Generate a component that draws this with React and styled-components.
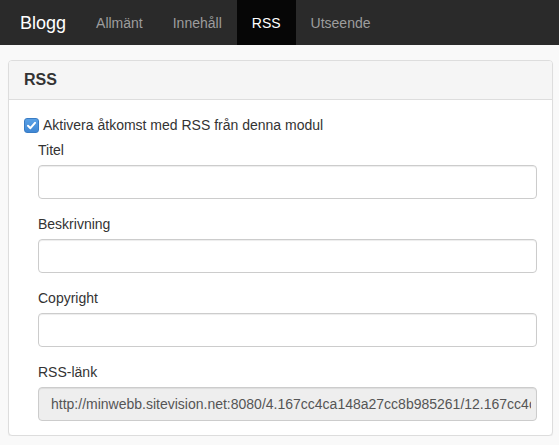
import React from "react";
import styled, { createGlobalStyle } from "styled-components";

const Global = createGlobalStyle`
  * { box-sizing: border-box; }
  html, body { margin: 0; padding: 0; }
  body {
    background: #f9f9f9;
    font-family: "Helvetica Neue", "Liberation Sans", Arial, sans-serif;
    font-size: 14px;
    line-height: 20px;
    color: #333;
  }
`;

const Navbar = styled.nav`
  display: flex;
  align-items: stretch;
  height: 45px;
  background: #2a2a2a;
  padding-left: 5px;
`;

const Brand = styled.a`
  display: flex;
  align-items: center;
  padding: 0 15px;
  font-size: 18px;
  color: #fff;
  text-decoration: none;
`;

const NavLink = styled.a`
  display: flex;
  align-items: center;
  padding: 0 15px;
  font-size: 14px;
  text-decoration: none;
  color: ${(p) => (p.$active ? "#fff" : "#9d9d9d")};
  background: ${(p) => (p.$active ? "#060606" : "transparent")};
`;

const Page = styled.main`
  padding: 15px 6px 0 8px;
`;

const Panel = styled.section`
  background: #fff;
  border: 1px solid #ddd;
  border-radius: 4px;
  box-shadow: 0 1px 1px rgba(0, 0, 0, 0.05);
  overflow: hidden;
`;

const PanelHeading = styled.header`
  background: #f5f5f5;
  border-bottom: 1px solid #ddd;
  padding: 9px 15px;
  height: 39px;
`;

const PanelTitle = styled.h3`
  margin: 0;
  font-size: 16px;
  line-height: 20px;
  font-weight: bold;
  color: #333;
`;

const PanelBody = styled.div`
  padding: 15px 15px 14px 15px;
`;

const CheckRow = styled.label`
  display: flex;
  align-items: center;
  gap: 4px;
  height: 20px;
  margin-bottom: 5px;
  cursor: pointer;
`;

const CheckBox = styled.span`
  display: inline-flex;
  align-items: center;
  justify-content: center;
  width: 15px;
  height: 15px;
  border-radius: 3px;
  background: linear-gradient(#5aa1e6, #3f87d4);
  border: 1px solid #3a7cc4;
`;

const Fields = styled.div`
  padding-left: 14px;
`;

const FormGroup = styled.div`
  margin-bottom: 15px;
  &:last-child { margin-bottom: 0; }
`;

const Label = styled.label`
  display: block;
  margin-bottom: 5px;
  font-size: 14px;
  line-height: 20px;
  color: #333;
`;

const Input = styled.input`
  display: block;
  width: 100%;
  height: 34px;
  padding: 6px 5px 6px 12px;
  font-family: inherit;
  font-size: 14px;
  color: #555;
  background: ${(p) => (p.readOnly ? "#eee" : "#fff")};
  border: 1px solid #ccc;
  border-radius: 4px;
  box-shadow: inset 0 1px 1px rgba(0, 0, 0, 0.075);
  outline: none;
`;

const fields = [
  { id: "title", label: "Titel" },
  { id: "desc", label: "Beskrivning" },
  { id: "copyright", label: "Copyright" },
];

export default function App() {
  return (
    <>
      <Global />
      <Navbar>
        <Brand href="#">Blogg</Brand>
        <NavLink href="#">Allmänt</NavLink>
        <NavLink href="#">Innehåll</NavLink>
        <NavLink href="#" $active>RSS</NavLink>
        <NavLink href="#">Utseende</NavLink>
      </Navbar>
      <Page>
        <Panel>
          <PanelHeading>
            <PanelTitle>RSS</PanelTitle>
          </PanelHeading>
          <PanelBody>
            <CheckRow>
              <CheckBox>
                <svg width="11" height="11" viewBox="0 0 11 11">
                  <path d="M2 5.8 L4.4 8.2 L9 2.8" fill="none" stroke="#fff" strokeWidth="2" strokeLinecap="round" strokeLinejoin="round" />
                </svg>
              </CheckBox>
              Aktivera åtkomst med RSS från denna modul
            </CheckRow>
            <Fields>
              {fields.map((f) => (
                <FormGroup key={f.id}>
                  <Label htmlFor={f.id}>{f.label}</Label>
                  <Input id={f.id} type="text" />
                </FormGroup>
              ))}
              <FormGroup>
                <Label htmlFor="link">RSS-länk</Label>
                <Input
                  id="link"
                  type="text"
                  readOnly
                  value="http://minwebb.sitevision.net:8080/4.167cc4ca148a27cc8b985261/12.167cc4ca148a27cc8b98528e/rss.xml"
                />
              </FormGroup>
            </Fields>
          </PanelBody>
        </Panel>
      </Page>
    </>
  );
}
